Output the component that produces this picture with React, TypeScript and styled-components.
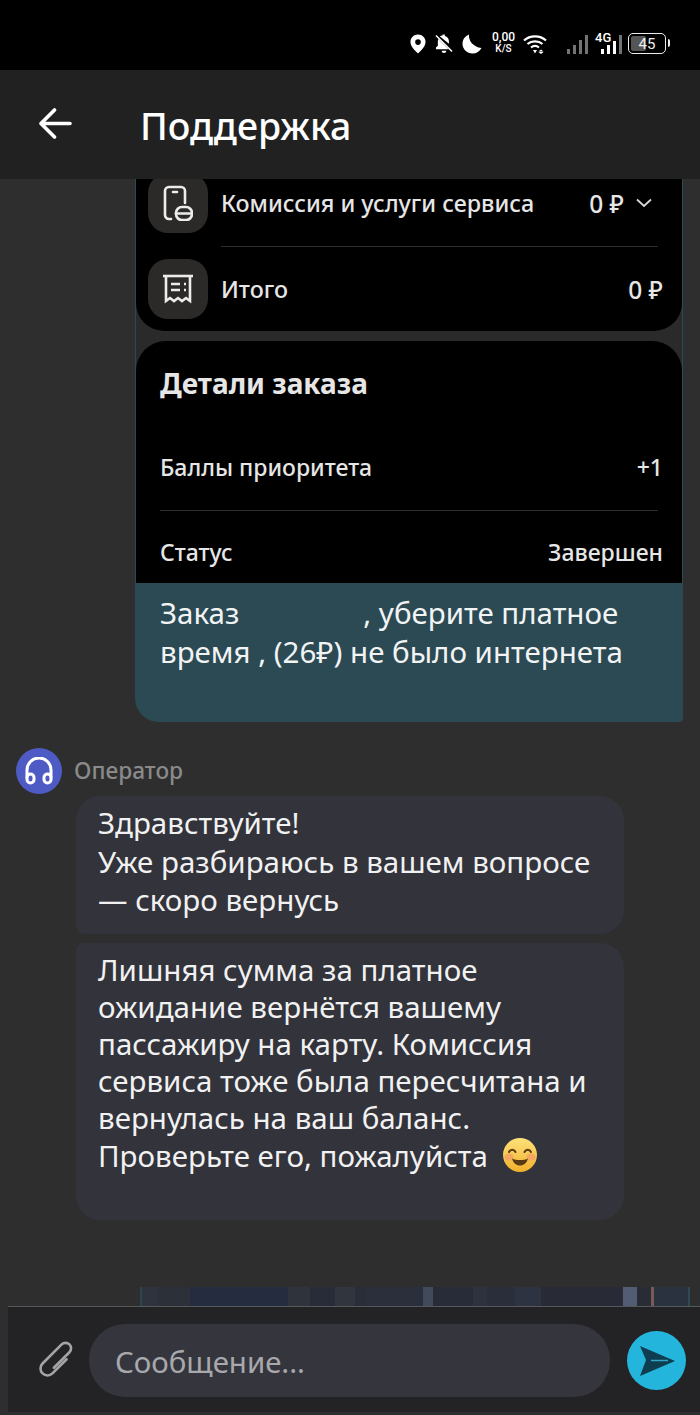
import React from 'react';
import styled, { createGlobalStyle } from 'styled-components';

const GlobalStyle = createGlobalStyle`
  html, body {
    margin: 0;
    padding: 0;
    background: #2e2e2e;
  }
  body {
    font-family: "Noto Sans", "Open Sans", sans-serif;
  }
`;

// top edge of the next attachment, barely scrolled into view
const stripParts: [string, number][] = [
  ['#2c464f', 2], ['#2e333d', 16], ['#2c3038', 32], ['#262c3f', 98], ['#2f333b', 22], ['#282c38', 25],
  ['#31353d', 20], ['#292d38', 10], ['#2b2f3b', 58], ['#414a5a', 10], ['#282c38', 40], ['#2e323c', 14],
  ['#2a2e3a', 28], ['#2d3340', 26], ['#282b35', 82], ['#525c73', 14], ['#292c35', 14], ['#7a5a58', 3],
  ['#2b323f', 34], ['#2f4a54', 2]
];

const StatusIcons = () => (
  <StatusBar>
    <svg width="16" height="20" viewBox="0 0 17 20">
      <path fill="#fff" fillRule="evenodd" d="M8.5 0C3.900 0 .5 3.500.5 7.800c0 4.600 4.600 9 8 12.200 3.400-3.200 8-7.600 8-12.200C16.500 3.500 13.100 0 8.500 0zm0 5a3 3 0 1 1 0 6 3 3 0 0 1 0-6z" />
    </svg>
    <svg width="18" height="20" viewBox="0 0 19 20">
      <path fill="#fff" d="M8 0h2.400v1.500c2.800.6 4.300 3 4.300 5.800v2.500L5 1.900C5.800 1.300 6.900 1 8 1zM3.600 4.600l10.800 11H1v-1.800l2-2V7.300c0-1 .2-1.900.6-2.700zM7 17h5a2.500 2.500 0 0 1-5 0z" />
      <path stroke="#fff" strokeWidth="1.600" d="M1 1l17 17" />
    </svg>
    <svg width="20" height="20" viewBox="0 0 20 20">
      <path fill="#fff" d="M7 .5C6.300 6.500 11 13 19.500 14c-1.700 3.500-5 5.500-9 5.500C5 19.500.5 15 .5 9.700.5 5.500 3.200 2 7 .5z" />
    </svg>
    <NetSpeed>
      <span>0,00</span>
      <small>K/S</small>
    </NetSpeed>
    <svg width="24" height="20" viewBox="0 0 24 20">
      <g fill="none" stroke="#fff" strokeWidth="2.200">
        <path d="M1 6.500C7 1 17 1 23 6.500" />
        <path d="M4.500 10c4-3.500 11-3.500 15 0" />
        <path d="M8 13.500c2.300-1.800 5.700-1.800 8 0" />
      </g>
      <path fill="#fff" d="M10 16h4l-2 3.500zM18 15.500l2.500 2h-5zM15.500 18h5l-2.500 2z" />
    </svg>
    <SignalBars $dim $gap={11}>
      {[5, 9, 14, 19].map((h) => (
        <Bar key={h} $h={h} />
      ))}
    </SignalBars>
    <CellGroup>
      <CellLabel>4G</CellLabel>
      <SignalBars>
        <Bar $h={5} />
        <Bar $h={9} />
        <Bar $h={13} />
        <Bar $h={19} $faded />
      </SignalBars>
    </CellGroup>
    <Battery>
      <BatteryFill />
      <BatteryLabel>45</BatteryLabel>
      <BatteryNub />
    </Battery>
  </StatusBar>
);

const PhoneCoinIcon = () => (
  <svg width="30" height="36" viewBox="0 0 30 36" fill="none" stroke="#ececec" strokeWidth="2.600" strokeLinecap="round">
    <path d="M8 34H6a4 4 0 0 1-4-4V6a4 4 0 0 1 4-4h12a4 4 0 0 1 4 4v12" />
    <path d="M10 7h4" />
    <rect x="13" y="22" width="16" height="13" rx="6" />
    <path d="M13 28.500h16" />
  </svg>
);

const ReceiptIcon = () => (
  <svg width="32" height="30" viewBox="0 0 32 30" fill="none" stroke="#ececec" strokeWidth="2.600">
    <path d="M1 2h30" />
    <path d="M4 2v25l4-3 4 3 4-3 4 3 4-3 4 3V2" />
    <path d="M9 10h9M22 10h2M9 16h9M22 16h2" />
  </svg>
);

const HeadphonesIcon = () => (
  <svg width="28" height="28" viewBox="0 0 28 28" fill="none" stroke="#fff" strokeWidth="3" strokeLinecap="round">
    <path d="M2 20V13a12 12 0 0 1 24 0v7" />
    <rect x="2" y="17" width="7" height="9" rx="3.500" />
    <rect x="19" y="17" width="7" height="9" rx="3.500" />
  </svg>
);

const ClipIcon = () => (
  <svg width="38" height="42" viewBox="0 0 38 42" fill="none" stroke="#a4a4a6" strokeWidth="2.600" strokeLinecap="round">
    <g transform="rotate(45 19 21)">
      <path d="M26 13V33a7 7 0 0 1-14 0V6a5.500 5.500 0 0 1 11 0V28" />
    </g>
  </svg>
);

const SendIcon = () => (
  <svg width="59" height="59" viewBox="0 0 59 59">
    <path fill="#0e3d50" d="M48 30 13 15l6 14-6 16z" />
    <path stroke="#2fa6c4" strokeWidth="1.500" d="M24 29.500h17" />
  </svg>
);

const SmileEmoji = () => (
  <EmojiSvg width="36" height="36" viewBox="0 0 36 36">
    <defs>
      <linearGradient id="smile" x1="0" y1="0" x2="0" y2="1">
        <stop offset="0" stopColor="#fde27a" />
        <stop offset="1" stopColor="#f2b02c" />
      </linearGradient>
    </defs>
    <circle cx="18" cy="18" r="17" fill="url(#smile)" />
    <ellipse cx="7" cy="20" rx="4.500" ry="3.500" fill="#f59a6a" opacity="0.7" />
    <ellipse cx="29" cy="20" rx="4.500" ry="3.500" fill="#f59a6a" opacity="0.7" />
    <g fill="none" stroke="#5a3a14" strokeWidth="2" strokeLinecap="round">
      <path d="M7 15c1.500-3 5-3 6.500 0" />
      <path d="M22.500 15c1.500-3 5-3 6.500 0" />
    </g>
    <path fill="#5a3a14" d="M10 21.500c4 2 12 2 16 0-1 4.500-4.500 7-8 7s-7-2.500-8-7z" />
  </EmojiSvg>
);

const App = () => (
  <Page>
    <GlobalStyle />
    <StatusIcons />
    <Header>
      <BackButton aria-label="Назад">
        <svg width="33" height="31" viewBox="0 0 33 31" fill="none" stroke="#fff" strokeWidth="3.600" strokeLinecap="round" strokeLinejoin="round">
          <path d="M2 15.500h29M15.500 2 2 15.500 15.500 29" />
        </svg>
      </BackButton>
      <Title>Поддержка</Title>
    </Header>

    <Chat>
      <OutgoingBubble>
        <Screenshot>
          <Card $kind="top">
            <FeeRow>
              <Tile><PhoneCoinIcon /></Tile>
              <FeeLabel>Комиссия и услуги сервиса</FeeLabel>
              <FeeValue>0 ₽</FeeValue>
              <Chevron width="18" height="10" viewBox="0 0 18 10">
                <path d="M2 1.500 9 8l7-6.500" />
              </Chevron>
            </FeeRow>
            <FeeDivider />
            <FeeRow>
              <Tile><ReceiptIcon /></Tile>
              <FeeLabel>Итого</FeeLabel>
              <FeeValue>0 ₽</FeeValue>
            </FeeRow>
          </Card>
          <Card $kind="bottom">
            <CardTitle>Детали заказа</CardTitle>
            <DetailRow><span>Баллы приоритета</span><span>+1</span></DetailRow>
            <DetailDivider />
            <DetailRow><span>Статус</span><span>Завершен</span></DetailRow>
          </Card>
        </Screenshot>
        <OutgoingText>
          Заказ<Redacted />, уберите платное<br />
          время , (26₽) не было интернета
        </OutgoingText>
      </OutgoingBubble>

      <OperatorRow>
        <Avatar><HeadphonesIcon /></Avatar>
        <OperatorName>Оператор</OperatorName>
      </OperatorRow>

      <IncomingBubble $tight={false}>
        Здравствуйте!<br />
        Уже разбираюсь в вашем вопросе<br />
        — скоро вернусь
      </IncomingBubble>
      <IncomingBubble $tight>
        Лишняя сумма за платное<br />
        ожидание вернётся вашему<br />
        пассажиру на карту. Комиссия<br />
        сервиса тоже была пересчитана и<br />
        вернулась на ваш баланс.<br />
        Проверьте его, пожалуйста <SmileEmoji />
      </IncomingBubble>

      <NextAttachment>
        {stripParts.map(([color, width], i) => (
          <StripPart key={i} $color={color} $width={width} />
        ))}
      </NextAttachment>
    </Chat>

    <Composer>
      <AttachButton aria-label="Прикрепить"><ClipIcon /></AttachButton>
      <MessageField>Сообщение...</MessageField>
      <SendButton aria-label="Отправить"><SendIcon /></SendButton>
    </Composer>
  </Page>
);

const Page = styled.div`
  width: 700px;
  height: 1415px;
  display: flex;
  flex-direction: column;
  overflow: hidden;
  background: #2e2e2e;
`;

const StatusBar = styled.div`
  flex: none;
  height: 70px;
  box-sizing: border-box;
  padding: 34px 31px 0 0;
  background: #000;
  display: flex;
  justify-content: flex-end;
  align-items: flex-start;
  gap: 9px;
  color: #fff;
`;

const NetSpeed = styled.div`
  width: 25px;
  margin: -3px -2px 0 0;
  display: flex;
  flex-direction: column;
  align-items: center;
  font-family: "Roboto", sans-serif;
  font-weight: 500;
  font-size: 12px;
  line-height: 12px;

  small {
    font-size: 10px;
    line-height: 12px;
  }
`;

const SignalBars = styled.div<{ $dim?: boolean; $gap?: number }>`
  height: 20px;
  margin-left: ${(p) => p.$gap ?? 0}px;
  display: flex;
  align-items: flex-end;
  gap: 3px;
  opacity: ${(p) => (p.$dim ? 0.45 : 1)};
`;

const Bar = styled.div<{ $h: number; $faded?: boolean }>`
  width: 3px;
  height: ${(p) => p.$h}px;
  background: #fff;
  opacity: ${(p) => (p.$faded ? 0.45 : 1)};
`;

const CellGroup = styled.div`
  position: relative;
  width: 27px;
  margin-left: -2px;
  display: flex;
  justify-content: flex-end;
`;

const CellLabel = styled.span`
  position: absolute;
  left: 0;
  top: -2px;
  font-family: "Roboto", sans-serif;
  font-weight: 500;
  font-size: 13px;
  line-height: 12px;
`;

const Battery = styled.div`
  position: relative;
  width: 38px;
  height: 21px;
  margin: -1px 3px 0 -3px;
  box-sizing: border-box;
  border: 1.500px solid #eee;
  border-radius: 5px;
  display: flex;
  align-items: center;
  justify-content: center;
`;

const BatteryFill = styled.div`
  position: absolute;
  left: 2px;
  top: 2px;
  bottom: 2px;
  width: 15px;
  background: #555;
  border-radius: 2px;
`;

const BatteryLabel = styled.span`
  position: relative;
  font-family: "Roboto", sans-serif;
  font-size: 15px;
  color: #eee;
`;

const BatteryNub = styled.div`
  position: absolute;
  right: -5px;
  top: 5px;
  width: 2px;
  height: 8px;
  background: #eee;
  border-radius: 0 2px 2px 0;
`;

const Header = styled.header`
  flex: none;
  height: 109px;
  box-sizing: border-box;
  padding: 0 0 3px 39px;
  background: #212121;
  display: flex;
  align-items: center;
  gap: 68px;
  position: relative;
  z-index: 1;
`;

const BackButton = styled.div`
  display: flex;
  width: 33px;
`;

const Title = styled.h1`
  margin: 0;
  padding-top: 4px;
  font-size: 37.500px;
  font-weight: 500;
  color: #fff;
`;

const Chat = styled.main`
  flex: 1;
  min-height: 0;
  overflow: hidden;
  display: flex;
  flex-direction: column;
`;

const OutgoingBubble = styled.div`
  flex: none;
  width: 548px;
  margin-left: 135px;
  background: #2b4a54;
  border-radius: 0 0 4px 24px;
  color: #f2f4f4;
`;

const Screenshot = styled.div`
  margin: 0 1px;
  background: #2a2a2a;
  display: flex;
  flex-direction: column;
  gap: 10px;
`;

const Card = styled.div<{ $kind: 'top' | 'bottom' }>`
  background: #000;
  color: #e6e6e6;
  box-sizing: border-box;
  height: ${(p) => (p.$kind === 'top' ? 152 : 242)}px;
  border-radius: ${(p) => (p.$kind === 'top' ? '0 0 28px 28px' : '30px 30px 0 0')};
  padding: ${(p) => (p.$kind === 'top' ? '0 19px 0 12px' : '0 19px 0 24px')};
`;

const FeeRow = styled.div`
  height: 60px;
  display: flex;
  align-items: center;
  gap: 13px;

  /* the list is scrolled: its first row runs under the header */
  &:first-child {
    margin-top: -6px;
  }
`;

const Tile = styled.div`
  flex: none;
  width: 60px;
  height: 60px;
  border-radius: 20px;
  background: #2b2a28;
  display: flex;
  align-items: center;
  justify-content: center;
`;

const FeeLabel = styled.span`
  flex: 1;
  font-size: 23.300px;
  font-weight: 500;
`;

const FeeValue = styled.span`
  font-size: 24.500px;
  font-weight: 500;
`;

const Chevron = styled.svg`
  margin: 0 10px 0 -2px;
  fill: none;
  stroke: #d8d8d8;
  stroke-width: 1.800;
`;

const FeeDivider = styled.div`
  height: 1px;
  margin: 13px 5px 12px 73px;
  background: #2c2c2c;
`;

const CardTitle = styled.h2`
  margin: 0;
  padding-top: 23px;
  height: 62px;
  box-sizing: border-box;
  font-size: 28px;
  font-weight: 700;
  line-height: 38px;
`;

const DetailRow = styled.div`
  height: 42px;
  box-sizing: border-box;
  padding-bottom: 2px;
  margin-top: 44px;
  display: flex;
  align-items: center;
  justify-content: space-between;
  font-size: 23px;
  font-weight: 500;

  & + div + & {
    margin-top: 21px;
  }
`;

const DetailDivider = styled.div`
  height: 1px;
  margin: 21px 5px 0 0;
  background: #2c2c2c;
`;

const OutgoingText = styled.p`
  margin: 0;
  padding: 10px 10px 51px 25px;
  font-size: 29.500px;
  line-height: 39px;
`;

const Redacted = styled.span`
  display: inline-block;
  width: 124px;
`;

const OperatorRow = styled.div`
  flex: none;
  margin: 26px 0 2px 16px;
  display: flex;
  align-items: center;
  gap: 12px;
`;

const Avatar = styled.div`
  flex: none;
  width: 46px;
  height: 46px;
  border-radius: 50%;
  background: #4f5bc4;
  display: flex;
  align-items: center;
  justify-content: center;
`;

const OperatorName = styled.span`
  padding-bottom: 2px;
  font-size: 22.700px;
  font-weight: 500;
  color: #8a8a8a;
`;

const IncomingBubble = styled.div<{ $tight: boolean }>`
  flex: none;
  width: 548px;
  box-sizing: border-box;
  margin-left: 76px;
  background: #32333b;
  color: #f1f1f1;
  border-radius: ${(p) => (p.$tight ? '8px 24px 24px 24px' : '24px 24px 24px 8px')};
  padding: ${(p) => (p.$tight ? '8px 10px 46px 22px' : '8px 10px 14px 22px')};
  margin-bottom: ${(p) => (p.$tight ? 67 : 9)}px;
  font-size: 29.500px;
  line-height: ${(p) => (p.$tight ? 37.200 : 38.500)}px;
`;

const EmojiSvg = styled.svg`
  vertical-align: -6px;
  margin-left: 6px;
`;

const NextAttachment = styled.div`
  flex: none;
  height: 19px;
  margin-left: 140px;
  display: flex;
`;

const StripPart = styled.div<{ $color: string; $width: number }>`
  width: ${(p) => p.$width}px;
  background: ${(p) => p.$color};
`;

const Composer = styled.footer`
  flex: none;
  height: 106px;
  margin: 0 0 3px 8px;
  box-sizing: border-box;
  border-top: 1px solid #55585a;
  background: #232326;
  padding: 16px 14px 15px 29px;
  display: flex;
  align-items: center;
`;

const AttachButton = styled.div`
  flex: none;
  width: 52px;
  display: flex;
`;

const MessageField = styled.div`
  flex: 1;
  height: 73px;
  box-sizing: border-box;
  padding: 3px 0 0 26px;
  border-radius: 36px;
  background: #35363d;
  color: #a8a8ad;
  font-size: 29.400px;
  display: flex;
  align-items: center;
`;

const SendButton = styled.div`
  flex: none;
  width: 59px;
  height: 59px;
  margin-left: 17px;
  border-radius: 50%;
  background: #23b5dc;
`;

export default App;
